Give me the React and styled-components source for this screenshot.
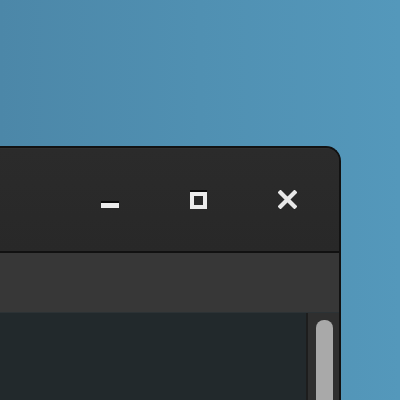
import React from 'react';
import styled, { createGlobalStyle } from 'styled-components';

const GlobalStyle = createGlobalStyle`
  html, body {
    margin: 0;
    padding: 0;
    overflow: hidden;
  }
  body {
    font-family: "Liberation Sans", Arial, sans-serif;
  }
`;

const Desktop = styled.div`
  width: 400px;
  height: 400px;
  overflow: hidden;
  box-sizing: border-box;
  padding: 146px 59px 0 0;
  background: linear-gradient(90deg, #4c87a8 0%, #5090b2 50%, #5498bb 100%);
`;

const Window = styled.div`
  margin-left: -12px;
  height: 280px;
  display: flex;
  flex-direction: column;
  background: #2a2a2a;
  border-top: 2px solid #121212;
  border-right: 2px solid #121212;
  border-top-right-radius: 15px;
  overflow: hidden;
`;

const TitleBar = styled.div`
  height: 103px;
  flex: none;
  display: flex;
  justify-content: flex-end;
  align-items: stretch;
  padding-right: 7px;
  background: linear-gradient(180deg, #343434 0px, #2b2b2b 1px, #282828 100%);
  border-bottom: 2px solid #111;
`;

const TitleButton = styled.button`
  width: 89px;
  border: 0;
  padding: 0;
  background: transparent;
  display: flex;
  align-items: center;
  justify-content: center;
  padding-top: ${p => p.$offset || 0}px;
`;

const Toolbar = styled.div`
  height: 59px;
  flex: none;
  background: #373737;
  border-bottom: 1px solid #2c3235;
`;

const Body = styled.div`
  flex: 1;
  display: flex;
`;

const Content = styled.div`
  flex: 1;
  background: #22292c;
  border-right: 2px solid #1d1d1d;
`;

const Trough = styled.div`
  width: 31px;
  flex: none;
  background: #2f2f2f;
  padding: 7px 7px 0 8px;
  box-sizing: border-box;
`;

const Thumb = styled.div`
  width: 17px;
  height: 200px;
  background: #a9a9a9;
  border-radius: 8px 8px 0 0;
`;

function MinimizeIcon() {
  return (
    <svg width="18" height="7" viewBox="0 0 18 7">
      <rect x="0" y="0" width="18" height="2" fill="#0c0c0c" />
      <rect x="0" y="2" width="18" height="5" fill="#ececec" />
    </svg>
  );
}

function MaximizeIcon() {
  return (
    <svg width="17" height="19" viewBox="0 0 17 19">
      <rect x="0" y="0" width="17" height="2" fill="#0c0c0c" />
      <rect x="2" y="4" width="13" height="13" fill="none" stroke="#ececec" strokeWidth="4" />
    </svg>
  );
}

function CloseIcon() {
  return (
    <svg width="19" height="19" viewBox="0 0 19 19">
      <path d="M2.5 2.5 L16.5 16.5 M16.5 2.5 L2.5 16.5" stroke="#e8e8e8" strokeWidth="4.2" strokeLinecap="square" />
    </svg>
  );
}

export default function App() {
  return (
    <>
      <GlobalStyle />
      <Desktop>
        <Window>
          <TitleBar>
            <TitleButton $offset={9} aria-label="minimize"><MinimizeIcon /></TitleButton>
            <TitleButton aria-label="maximize"><MaximizeIcon /></TitleButton>
            <TitleButton aria-label="close"><CloseIcon /></TitleButton>
          </TitleBar>
          <Toolbar />
          <Body>
            <Content />
            <Trough>
              <Thumb />
            </Trough>
          </Body>
        </Window>
      </Desktop>
    </>
  );
}
